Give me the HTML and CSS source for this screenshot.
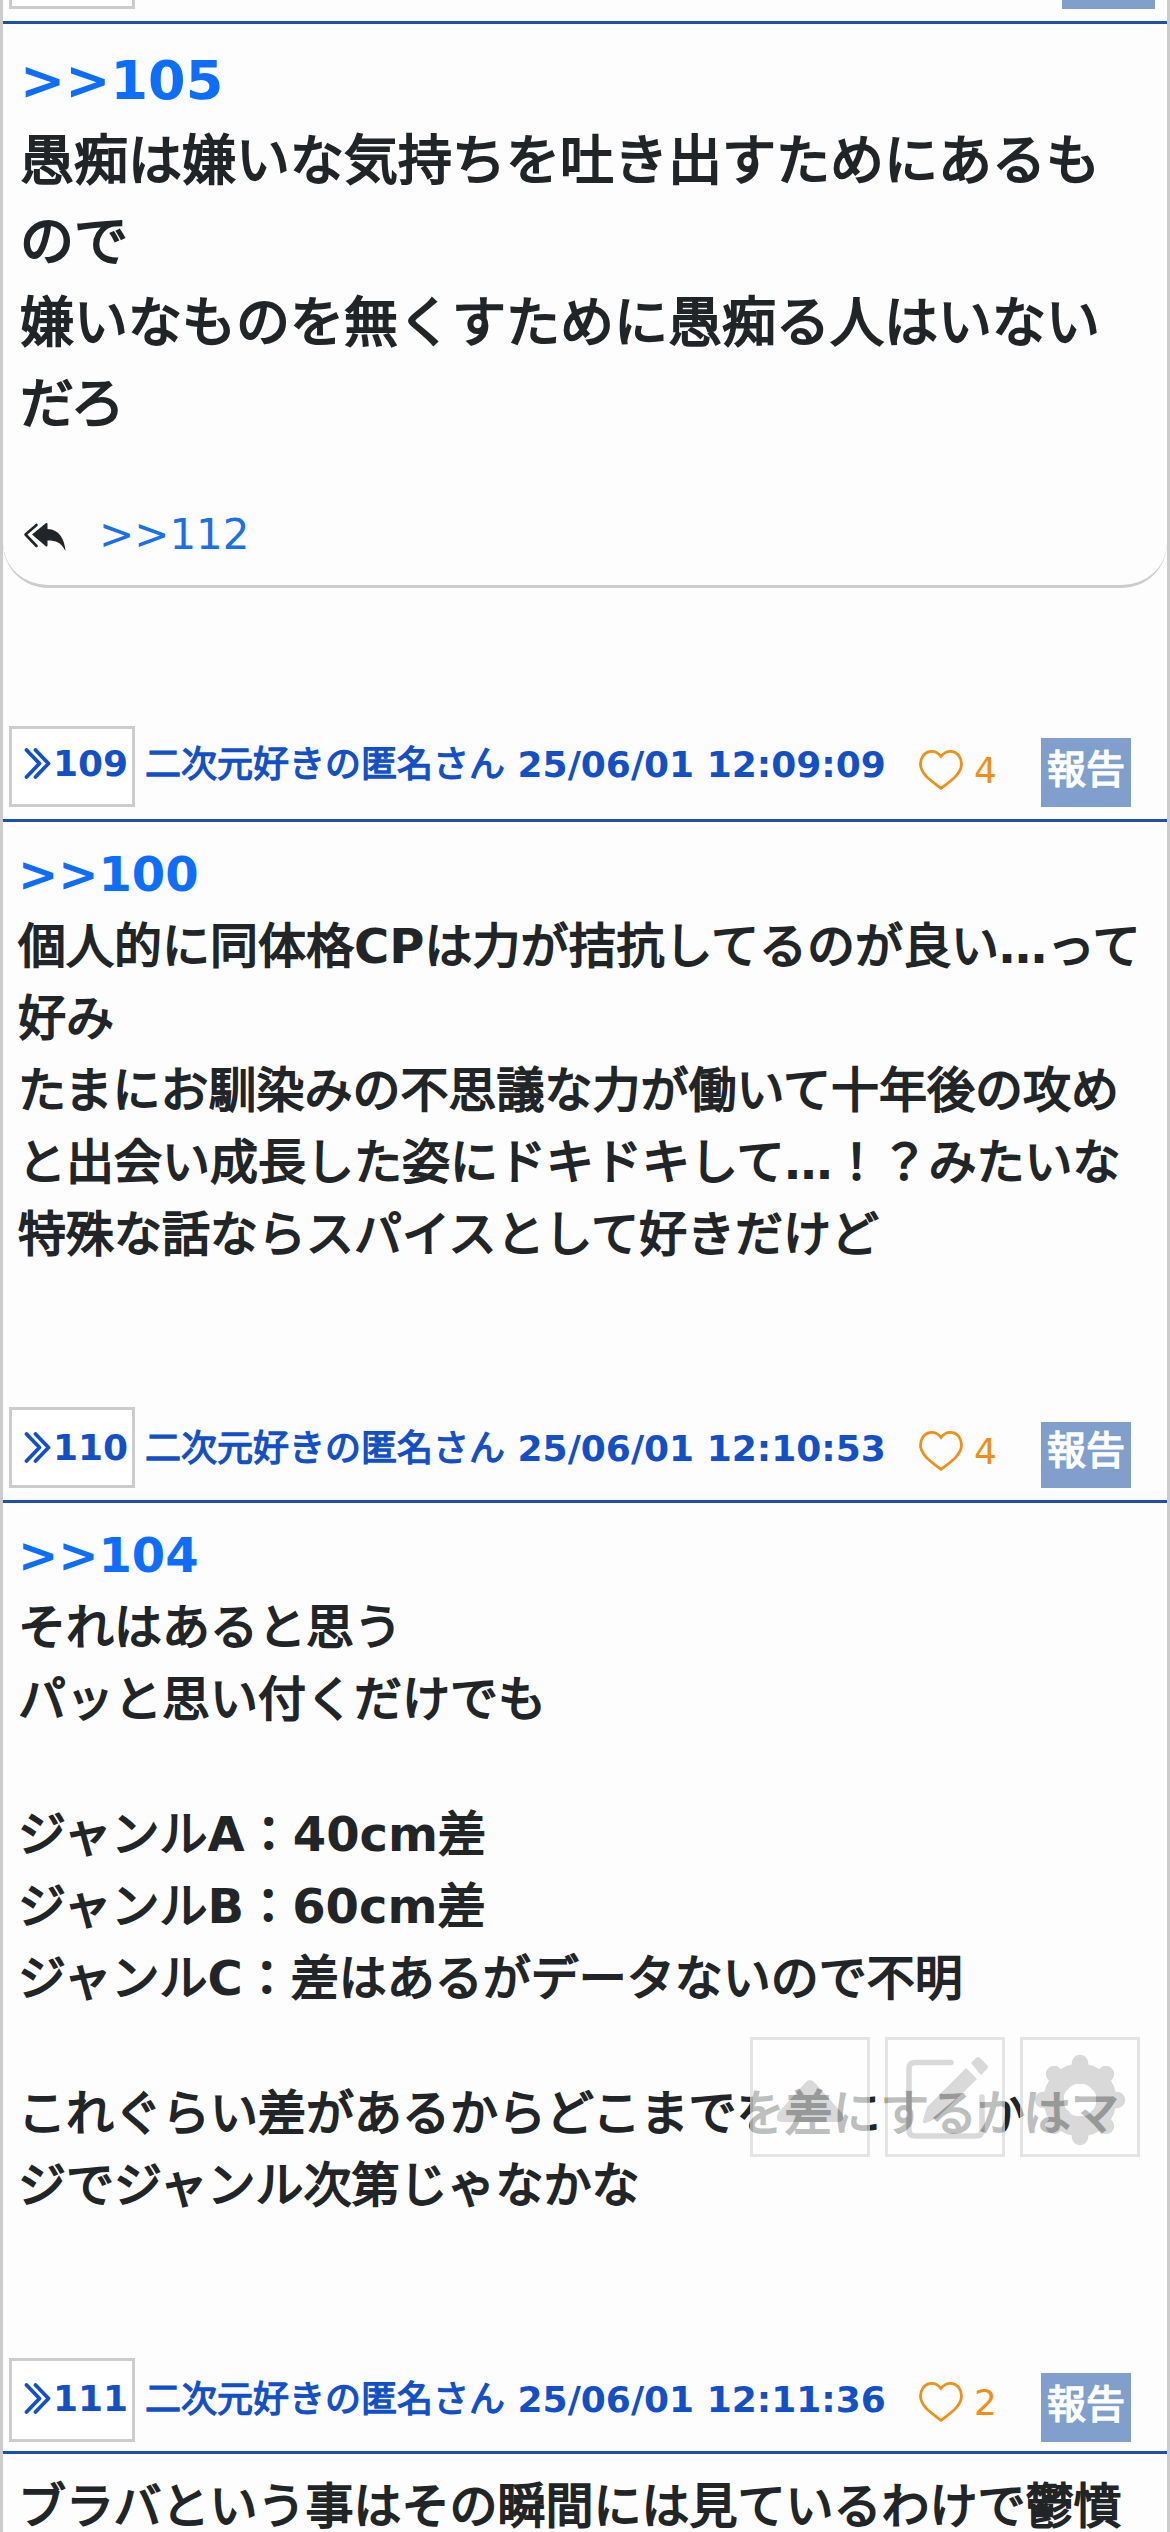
FILE: index.html
```html
<!DOCTYPE html>
<html lang="ja">
<head>
<meta charset="utf-8">
<title>スレッド</title>
<link rel="stylesheet" href="styles.css">
</head>
<body>
<svg class="defs" aria-hidden="true">
<symbol id="chev" viewBox="0 0 26 31"><path d="M2 2 15 15.500 2 29M11 2 24 15.500 11 29" fill="none" stroke="currentColor" stroke-width="3.8" stroke-linecap="round" stroke-linejoin="round"/></symbol>
<symbol id="heart" viewBox="0 0 44 40"><path d="M22 6.500C18.500 2 14 1 10.500 1.700 5 2.700 1.500 8 1.500 14 1.500 24 12.500 31 22 38.300 31.500 31 42.500 24 42.500 14 42.500 8 39 2.700 33.500 1.700 30 1 25.500 2 22 6.500Z" fill="none" stroke="currentColor" stroke-width="2.800"/></symbol>
</svg>
<main class="thread">
  <header class="head head-cut">
    <a class="num"></a>
    <span class="report"></span>
  </header>
  <article class="post post-large">
    <p class="line link"><b>&gt;&gt;105</b></p>
    <p class="line">愚痴は嫌いな気持ちを吐き出すためにあるもので</p>
    <p class="line">嫌いなものを無くすために愚痴る人はいないだろ</p>
    <div class="replies">
      <svg class="reply-icon" viewBox="0 0 42 28"><path d="M13 2 2 11.500 13 23" fill="none" stroke="currentColor" stroke-width="2.600" stroke-linecap="round" stroke-linejoin="round"/><path d="M8.500 11.500 22 .500q2-1.500 2 1V6C36 6.500 41 16 42 28 37 19 33 17.500 24 17.500v4.500q0 2.500-2 1Z" fill="currentColor"/></svg>
      <a>&gt;&gt;112</a>
    </div>
  </article>
  <header class="head head-109">
    <a class="num"><svg class="chev"><use href="#chev"/></svg>109</a>
    <span class="meta">二次元好きの匿名さん<b> 25/06/01 12:09:09</b></span>
    <span class="like"><svg class="heart"><use href="#heart"/></svg>4</span>
    <span class="report">報告</span>
  </header>
  <article class="post post-109">
    <p class="line link"><b>&gt;&gt;100</b></p>
    <p class="line">個人的に同体格<b>CP</b>は力が拮抗してるのが良い<b>…</b>って好み</p>
    <p class="line">たまにお馴染みの不思議な力が働いて十年後の攻めと出会い成長した姿にドキドキして<b>…</b>！？みたいな特殊な話ならスパイスとして好きだけど</p>
  </article>
  <header class="head head-110">
    <a class="num"><svg class="chev"><use href="#chev"/></svg>110</a>
    <span class="meta">二次元好きの匿名さん<b> 25/06/01 12:10:53</b></span>
    <span class="like"><svg class="heart"><use href="#heart"/></svg>4</span>
    <span class="report">報告</span>
  </header>
  <article class="post post-110">
    <p class="line link"><b>&gt;&gt;104</b></p>
    <p class="line">それはあると思う</p>
    <p class="line">パッと思い付くだけでも</p>
    <p class="line gap">ジャンル<b>A</b>：<b>40cm</b>差</p>
    <p class="line">ジャンル<b>B</b>：<b>60cm</b>差</p>
    <p class="line">ジャンル<b>C</b>：差はあるがデータないので不明</p>
    <p class="line gap">これぐらい差があるからどこまでを差にするかはマジでジャンル次第じゃなかな</p>
  </article>
  <header class="head head-111">
    <a class="num"><svg class="chev"><use href="#chev"/></svg>111</a>
    <span class="meta">二次元好きの匿名さん<b> 25/06/01 12:11:36</b></span>
    <span class="like"><svg class="heart"><use href="#heart"/></svg>2</span>
    <span class="report">報告</span>
  </header>
  <article class="post">
    <p class="line">ブラバという事はその瞬間には見ているわけで鬱憤</p>
  </article>
</main>
<nav class="tools">
  <a class="tool"><svg viewBox="0 0 114 114"><path d="M52 43q5-6 10 0L89 73q4 9-5 9H30q-9 0-5-9Z" fill="currentColor"/></svg></a>
  <a class="tool"><svg viewBox="0 0 114 114"><path d="M63 22.500H27q-6 0-6 6V90q0 6 6 6H88q6 0 6-6V57" fill="none" stroke="currentColor" stroke-width="5.500" stroke-linecap="round"/><path d="M78 28 89 39 49 78 38 83q-4 1-3-3L39 67Z M83 23l5-5q2-2 4 0l7 7q2 2 0 4l-6 6Z" fill="currentColor"/></svg></a>
  <a class="tool"><svg viewBox="0 0 114 114"><g fill="none" stroke="currentColor"><circle cx="57" cy="60" r="26.500" stroke-width="20"/><path d="M57 36V23M57 84V97M33 60H20M81 60H94M40 43 31 34M74 43 83 34M40 77 31 86M74 77 83 86" stroke-width="16.500" stroke-linecap="round"/></g></svg></a>
</nav>
</body>
</html>
```
FILE: styles.css
```css
* { box-sizing: border-box; }
html, body { margin: 0; height: 2532px; overflow: hidden; }
body {
  position: relative;
  background: #fdfdfd;
  color: #212527;
  font-family: "DejaVu Sans", "Noto Sans CJK JP", sans-serif;
}
.defs { position: absolute; width: 0; height: 0; }
.thread {
  height: 2532px;
  border: solid #ccc;
  border-width: 0 3px;
  overflow: hidden;
}
p { margin: 0; }
b { font-weight: bold; -webkit-text-stroke: 0; }

/* Japanese text is thickened with a stroke; Latin runs use the bold face */
.line, .meta, .report { -webkit-text-stroke: .037em currentColor; }

.head {
  display: flex;
  align-items: flex-start;
  height: 96px;
  padding-left: 6px;
  border-bottom: 3px solid #1f4fa8;
  white-space: nowrap;
}
.num {
  display: flex;
  align-items: center;
  width: 126px;
  height: 81px;
  padding-left: 12px;
  border: 3px solid #ccc;
  background: #fff;
  color: #1350c8;
  font-size: 36px;
  font-weight: bold;
}
.chev { width: 27px; height: 31px; margin-right: 2px; }
.meta {
  width: 744px;
  margin-left: 10px;
  color: #1350c8;
  font-size: 36px;
  line-height: 83px;
  white-space: pre;
}
.like {
  display: flex;
  align-items: center;
  width: 122px;
  height: 88px;
  margin-left: 30px;
  color: #ef8f17;
  font-size: 36px;
}
.heart { width: 44px; height: 40px; margin: 0 11px 1px 0; }
.report {
  width: 90px;
  height: 66px;
  margin-top: 15px;
  background: #809fcd;
  color: #fff;
  font-size: 39px;
  line-height: 57px;
  text-align: center;
}
.head-cut { height: 24px; justify-content: space-between; padding-right: 12px; }
.head-cut .num { height: 9px; border-top: 0; }
.head-cut .report { width: 93px; height: 9px; margin: 0; }
.head-109 { margin-top: 138px; }
.head-109 .num { padding-bottom: 6px; }
.head-109 .meta { line-height: 77px; }
.head-109 .report { height: 69px; margin-top: 12px; line-height: 63px; }
.head-111 .num { height: 84px; padding-bottom: 3px; }
.head-111 .report { height: 69px; line-height: 63px; }

.post {
  padding: 16px 15px 0;
  font-size: 48px;
  line-height: 72px;
}
.link { color: #0d6efd; }
.post-large {
  height: 564px;
  padding: 16px 17px 0;
  border-bottom: 3px solid #ccc;
  border-radius: 0 0 45px 45px;
  font-size: 54px;
  line-height: 81px;
}
.post-109 { height: 585px; }
.post-110 { height: 855px; }
.gap { margin-top: 63px; }
.replies {
  display: flex;
  align-items: center;
  gap: 33px;
  margin-top: 60px;
  font-size: 42px;
  line-height: 60px;
}
.replies a { color: #1a70e8; }
.reply-icon { width: 43px; height: 28px; margin: 3px 0 0 3px; }

.tools {
  position: absolute;
  top: 2037px;
  left: 750px;
  display: flex;
  gap: 15px;
  opacity: .7;
}
.tool {
  width: 120px;
  height: 120px;
  border: 3px solid #dadada;
  background: #fff;
  color: #cacaca;
}
.tool svg { display: block; width: 114px; height: 114px; }
```
